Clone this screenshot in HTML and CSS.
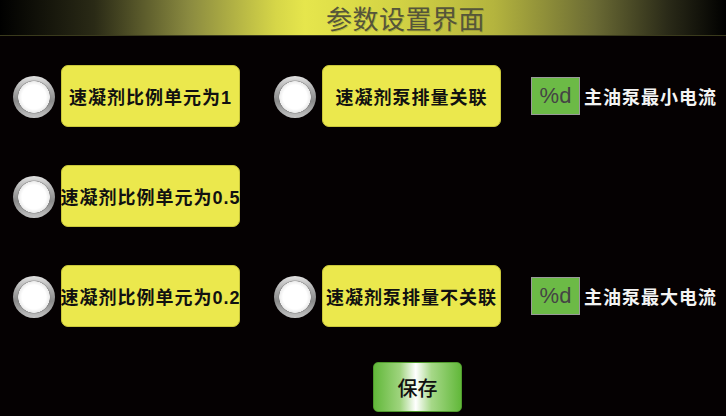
FILE: index.html
```html
<!DOCTYPE html>
<html lang="zh">
<head>
<meta charset="utf-8">
<title>参数设置界面</title>
<link rel="stylesheet" href="styles.css">
</head>
<body>
<header class="title-bar"><h1 class="title">参数设置界面</h1></header>
<main class="panel">
  <div class="row">
    <div class="option">
      <span class="radio"></span>
      <button class="opt-btn">速凝剂比例单元为1</button>
    </div>
    <div class="option col2">
      <span class="radio"></span>
      <button class="opt-btn">速凝剂泵排量关联</button>
    </div>
    <div class="field">
      <span class="num-box">%d</span>
      <span class="field-label">主油泵最小电流</span>
    </div>
  </div>
  <div class="row">
    <div class="option">
      <span class="radio"></span>
      <button class="opt-btn">速凝剂比例单元为0.5</button>
    </div>
  </div>
  <div class="row">
    <div class="option">
      <span class="radio"></span>
      <button class="opt-btn">速凝剂比例单元为0.2</button>
    </div>
    <div class="option col2">
      <span class="radio"></span>
      <button class="opt-btn">速凝剂泵排量不关联</button>
    </div>
    <div class="field">
      <span class="num-box">%d</span>
      <span class="field-label">主油泵最大电流</span>
    </div>
  </div>
  <div class="save-row">
    <button class="save-btn">保存</button>
  </div>
</main>
</body>
</html>
```
FILE: styles.css
```css
html, body {
  margin: 0;
  padding: 0;
}
body {
  width: 726px;
  height: 416px;
  overflow: hidden;
  background: #050102;
  font-family: "Liberation Sans", "Noto Sans CJK SC", sans-serif;
}
.title-bar {
  height: 35px;
  border-bottom: 1px solid #3a3a1c;
  background: linear-gradient(to right,
    #000 0%, #2a2a16 13%, #8a8a40 26%, #d6d648 38%, #e6e64c 42%,
    #d2d244 55%, #b4b43e 68%, #6a6a34 82%, #2a2a18 92%, #000 100%);
  display: flex;
  justify-content: flex-start;
  align-items: center;
}
.title {
  margin: 0 0 0 326px;
  font-family: "Noto Sans CJK SC", sans-serif;
  font-weight: 400;
  font-size: 26px;
  line-height: 30px;
  letter-spacing: 0.5px;
  color: #55553a;
  text-shadow: 1px 1px 0 rgba(0,0,0,0.15);
}
.panel {
  padding: 29px 0 0 13px;
  display: flex;
  flex-direction: column;
  gap: 38px;
}
.row {
  height: 62px;
  display: flex;
  align-items: center;
}
.option {
  display: flex;
  align-items: center;
  gap: 6px;
}
.col2 {
  margin-left: 34px;
}
.radio {
  width: 42px;
  height: 42px;
  border-radius: 50%;
  background:
    radial-gradient(circle at 50% 50%, #ffffff 0, #ffffff 12px, #ececec 15.5px, rgba(120,120,120,0.6) 16px, rgba(120,120,120,0) 17px),
    linear-gradient(to bottom, #e2e2e2 0%, #a8a8a8 35%, #8a8a8a 60%, #c4c4c4 100%);
  margin-top: 2px;
}
.opt-btn {
  width: 179px;
  height: 62px;
  padding: 0;
  border: 1px solid #c9c63a;
  border-radius: 7px;
  background: #ebe84d;
  font-family: "Liberation Sans", "Noto Sans CJK SC", sans-serif;
  font-weight: 700;
  font-size: 18px;
  letter-spacing: 1px;
  color: #111;
  white-space: nowrap;
  display: flex;
  justify-content: center;
  align-items: center;
  overflow: visible;
}
.field {
  margin-left: 30px;
  display: flex;
  align-items: center;
  gap: 4px;
}
.num-box {
  width: 49px;
  height: 38px;
  box-sizing: border-box;
  border: 1px solid #9a9a9a;
  background: #6cba46;
  color: #444;
  font-family: "Liberation Sans", sans-serif;
  font-size: 22px;
  display: flex;
  justify-content: center;
  align-items: center;
}
.field-label {
  color: #f4f4f4;
  font-family: "Noto Sans CJK SC", sans-serif;
  font-weight: 700;
  font-size: 18px;
  letter-spacing: 1px;
  white-space: nowrap;
}
.save-row {
  margin-top: -3px;
  padding-left: 360px;
}
.save-btn {
  width: 89px;
  height: 50px;
  padding: 0;
  border: 1px solid #4f9a2c;
  border-radius: 5px;
  background: linear-gradient(to right, #62b83a 0%, #9fd47e 30%, #ffffff 48%, #a6d888 66%, #62b83a 100%);
  font-family: "Noto Sans CJK SC", sans-serif;
  font-size: 20px;
  font-weight: 500;
  color: #111;
}
```
